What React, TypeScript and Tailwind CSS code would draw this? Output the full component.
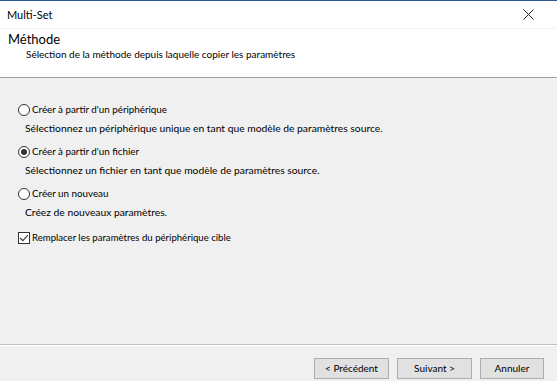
import React from 'react';

const font = { fontFamily: 'Lato, "Liberation Sans", sans-serif' };

function Radio({ checked }: { checked?: boolean }) {
  return (
    <span className="flex h-[12px] w-[12px] items-center justify-center rounded-full border border-[#333] bg-white">
      {checked && <span className="h-[6px] w-[6px] rounded-full bg-[#333]" />}
    </span>
  );
}

function Check() {
  return (
    <span className="flex h-[12px] w-[12px] items-center justify-center border border-[#333] bg-white">
      <svg width="10" height="10" viewBox="0 0 10 10">
        <path d="M1.2 5 L3.9 7.6 L8.8 2.2" fill="none" stroke="#333" strokeWidth="1.1" />
      </svg>
    </span>
  );
}

function Option({ label, desc, checked }: { label: string; desc: string; checked?: boolean }) {
  return (
    <div className="h-[42px]">
      <div className="flex h-[13px] items-center gap-[2px] text-[9.8px]">
        <Radio checked={checked} />
        <span>{label}</span>
      </div>
      <div className="mt-[6px] h-[13px] pl-[7px] text-[10.3px]">{desc}</div>
    </div>
  );
}

export default function App() {
  return (
    <div style={font} className="flex h-[381px] w-[557px] flex-col overflow-hidden border-t border-[#2b579a] bg-[#f0f0f0] text-[10px] leading-[13px] text-black">
      <div className="flex h-[28px] shrink-0 items-center justify-between border-b border-[#f3f3f3] bg-white pl-[7px] pr-[23px]">
        <span className="text-[11px]">Multi-Set</span>
        <svg width="11" height="11" viewBox="0 0 11 11">
          <path d="M0.5 0.5 L10.5 10.5 M10.5 0.5 L0.5 10.5" stroke="#222" strokeWidth="1" />
        </svg>
      </div>
      <div className="h-[49px] shrink-0 border-b border-[#a0a0a0] bg-white pl-[8px] pt-[2px]">
        <div className="text-[13px] leading-[17px]">Méthode</div>
        <div className="pl-[18px] leading-[13px]">Sélection de la méthode depuis laquelle copier les paramètres</div>
      </div>
      <div className="flex flex-1 flex-col pl-[18px] pt-[25px]">
        <Option label="Créer à partir d'un périphérique" desc="Sélectionnez un périphérique unique en tant que modèle de paramètres source." />
        <Option checked label="Créer à partir d'un fichier" desc="Sélectionnez un fichier en tant que modèle de paramètres source." />
        <Option label="Créer un nouveau" desc="Créez de nouveaux paramètres." />
        <div className="mt-[2px] flex h-[13px] items-center gap-[2px] text-[9.6px]">
          <Check />
          <span>Remplacer les paramètres du périphérique cible</span>
        </div>
      </div>
      <div className="h-[2px] shrink-0 border-t border-[#c0c0c0] bg-white" />
      <div className="flex h-[35px] shrink-0 items-start justify-end gap-[8px] pr-[13px] pt-[12px]">
        <button className="h-[21px] w-[75px] border border-[#adadad] bg-[#e1e1e1]">&lt; Précédent</button>
        <button className="h-[21px] w-[75px] border border-[#adadad] bg-[#e1e1e1]">Suivant &gt;</button>
        <button className="h-[21px] w-[64px] border border-[#adadad] bg-[#e1e1e1]">Annuler</button>
      </div>
    </div>
  );
}
